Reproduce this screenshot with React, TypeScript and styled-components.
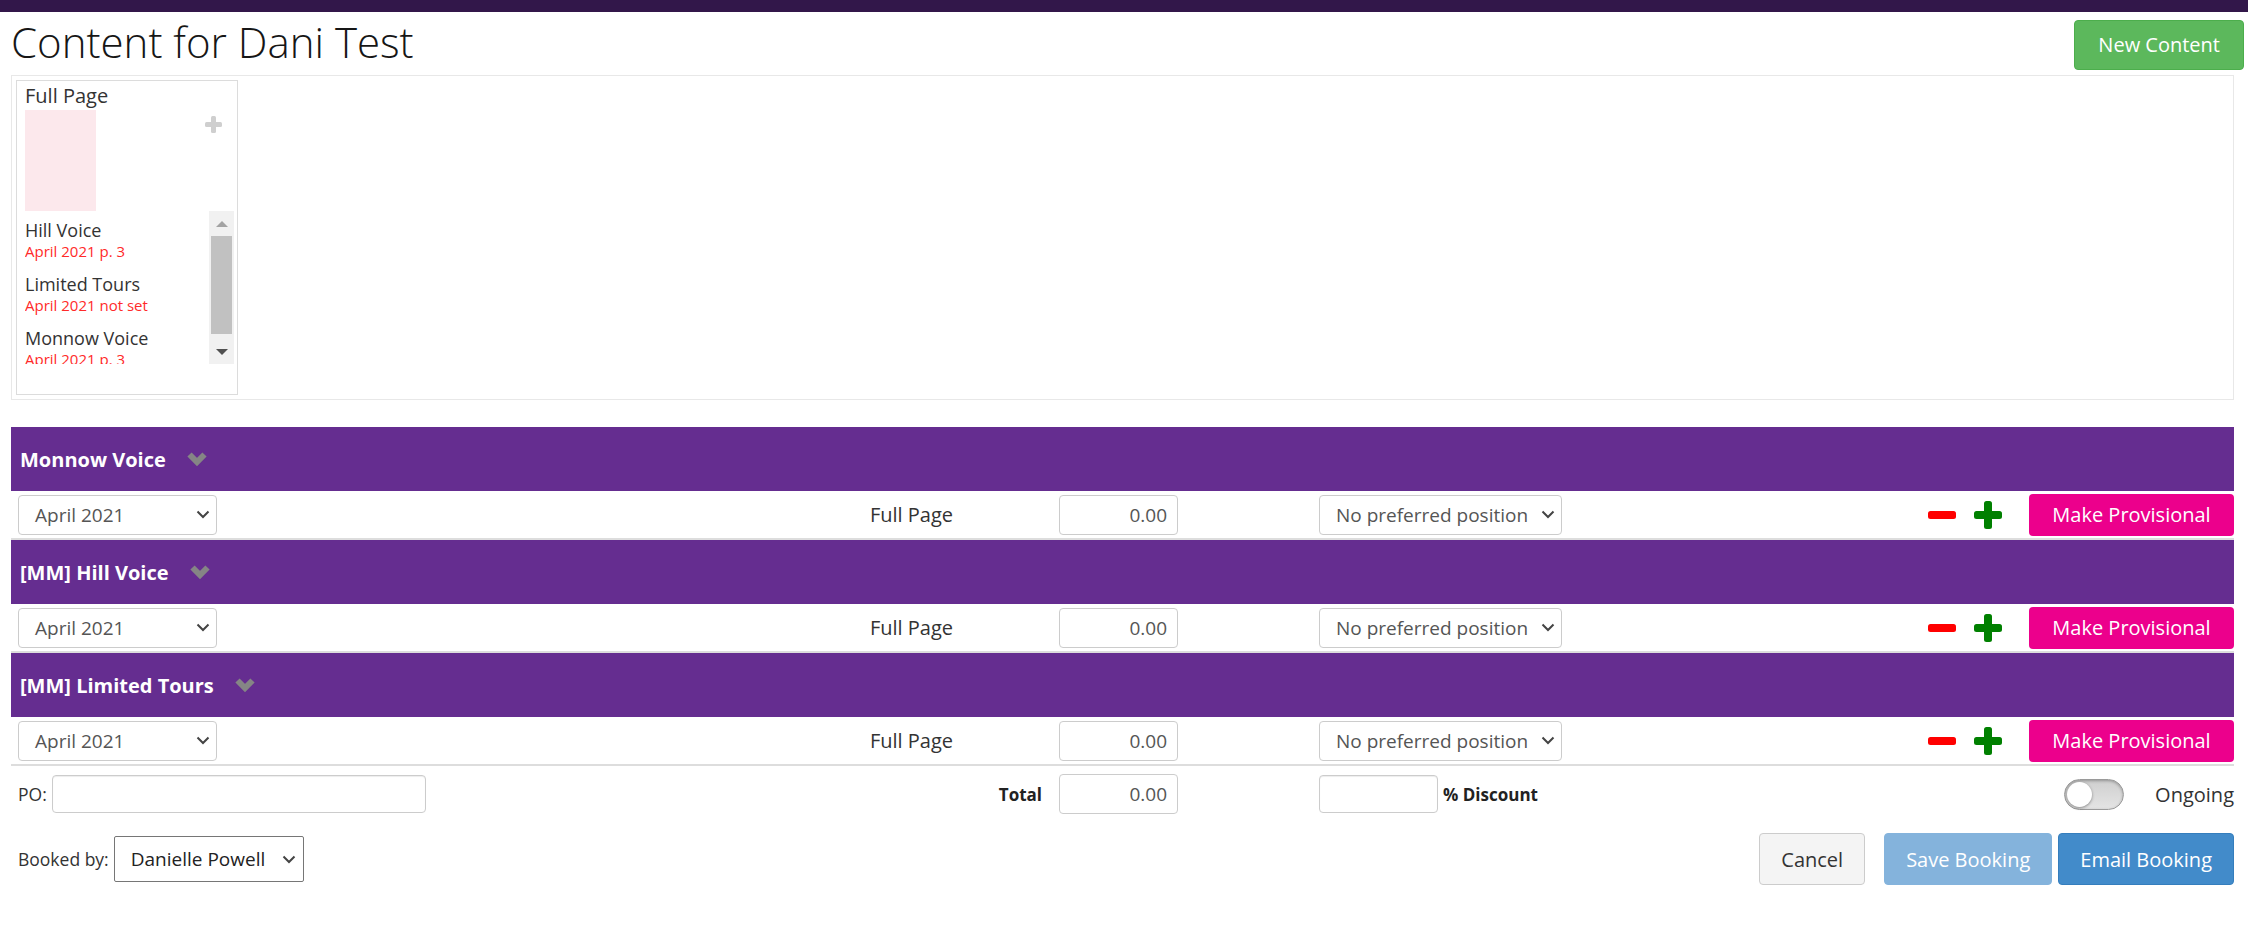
import React from "react";
import styled, { createGlobalStyle } from "styled-components";

const GlobalStyle = createGlobalStyle`
  * {
    box-sizing: border-box;
  }

  body {
    margin: 0;
    background: #fff;
    color: #333;
    font-family: "Open Sans", "Liberation Sans", sans-serif;
  }
`;

const publications = ["Monnow Voice", "[MM] Hill Voice", "[MM] Limited Tours"];

const bookings = [
  { title: "Hill Voice", detail: "April 2021 p. 3" },
  { title: "Limited Tours", detail: "April 2021 not set" },
  { title: "Monnow Voice", detail: "April 2021 p. 3" },
];

const SelectChevron = () => (
  <svg width="14" height="9" viewBox="0 0 14 9">
    <path d="M1.5 1.5 L7 7 L12.5 1.5" fill="none" stroke="#444" strokeWidth="2" />
  </svg>
);

const BarChevron = () => (
  <svg width="22" height="16" viewBox="0 0 22 16">
    <path d="M3.5 3.5 L11 11 L18.5 3.5" fill="none" stroke="#858585" strokeWidth="6" strokeLinejoin="miter" />
  </svg>
);

const CardPlus = () => (
  <svg width="17" height="17" viewBox="0 0 17 17">
    <rect x="6" y="0" width="5" height="17" rx="1.5" fill="#cfcfcf" />
    <rect x="0" y="6" width="17" height="5" rx="1.5" fill="#cfcfcf" />
  </svg>
);

const MinusIcon = () => (
  <svg width="28" height="8" viewBox="0 0 28 8">
    <rect x="0" y="0" width="28" height="8" rx="2.5" fill="#ff0000" />
  </svg>
);

const PlusIcon = () => (
  <svg width="28" height="28" viewBox="0 0 28 28">
    <rect x="10" y="0" width="8" height="28" rx="2.5" fill="#008000" />
    <rect x="0" y="10" width="28" height="8" rx="2.5" fill="#008000" />
  </svg>
);

const App = () => {
  return (
    <>
      <GlobalStyle />
      <TopBar />
      <Header>
        <Title>Content for Dani Test</Title>
        <NewButton>New Content</NewButton>
      </Header>
      <Main>
        <SizesPanel>
          <SizeCard>
            <CardLabel>Full Page</CardLabel>
            <PreviewRow>
              <Preview />
              <AddIcon>
                <CardPlus />
              </AddIcon>
            </PreviewRow>
            <ListRow>
              <BookingList>
                {bookings.map((b) => (
                  <BookingItem key={b.title}>
                    <BookingTitle>{b.title}</BookingTitle>
                    <BookingDetail>{b.detail}</BookingDetail>
                  </BookingItem>
                ))}
              </BookingList>
              <Scrollbar>
                <ScrollButton>
                  <Arrow $up $color="#a3a3a3" />
                </ScrollButton>
                <ScrollThumb />
                <ScrollButton>
                  <Arrow $color="#505050" />
                </ScrollButton>
              </Scrollbar>
            </ListRow>
          </SizeCard>
        </SizesPanel>

        <Sections>
          {publications.map((name) => (
            <Section key={name}>
              <Bar>
                <BarTitle>{name}</BarTitle>
                <BarToggle>
                  <BarChevron />
                </BarToggle>
              </Bar>
              <Row>
                <SelectBox $width={199}>
                  <span>April 2021</span>
                  <SelectChevron />
                </SelectBox>
                <SizeLabel>Full Page</SizeLabel>
                <NumberInput readOnly value="0.00" />
                <SelectBox $width={243} $col={5}>
                  <span>No preferred position</span>
                  <SelectChevron />
                </SelectBox>
                <RowIcons>
                  <MinusIcon />
                  <PlusIcon />
                </RowIcons>
                <PinkButton>Make Provisional</PinkButton>
              </Row>
            </Section>
          ))}
        </Sections>

        <TotalsRow>
          <PoGroup>
            <Field>
              <SmallLabel>PO:</SmallLabel>
              <TextInput $width={374} />
            </Field>
            <BoldLabel>Total</BoldLabel>
          </PoGroup>
          <NumberInput readOnly value="0.00" />
          <DiscountGroup>
            <TextInput $width={119} />
            <BoldLabel>% Discount</BoldLabel>
          </DiscountGroup>
          <OngoingGroup>
            <Switch>
              <SwitchKnob />
            </Switch>
            <span>Ongoing</span>
          </OngoingGroup>
        </TotalsRow>

        <FooterRow>
          <Field>
            <SmallLabel>Booked by:</SmallLabel>
            <UserSelect>
              <span>Danielle Powell</span>
              <SelectChevron />
            </UserSelect>
          </Field>
          <Actions>
            <ActionButton $variant="default">Cancel</ActionButton>
            <ActionButton $variant="disabled">Save Booking</ActionButton>
            <ActionButton $variant="primary">Email Booking</ActionButton>
          </Actions>
        </FooterRow>
      </Main>
    </>
  );
};

export default App;

const TopBar = styled.div`
  height: 12px;
  background: #32174a;
`;

const Header = styled.header`
  display: flex;
  justify-content: space-between;
  align-items: center;
  height: 63px;
  padding: 0 4px 0 11px;
`;

const Title = styled.h1`
  margin: 0 0 3px;
  font-size: 42px;
  font-weight: 300;
  line-height: 1.2;
  color: #161616;
`;

const NewButton = styled.button`
  height: 50px;
  margin-top: 2px;
  padding: 0 23px;
  border: 1px solid #4cae4c;
  border-radius: 4px;
  background: #5cb85c;
  color: #fff;
  font-family: inherit;
  font-size: 20px;
`;

const Main = styled.main`
  padding: 0 14px 0 11px;
`;

const SizesPanel = styled.div`
  height: 325px;
  padding: 4px;
  border: 1px solid #e8e8e8;
`;

const SizeCard = styled.div`
  display: flex;
  flex-direction: column;
  width: 222px;
  height: 315px;
  padding: 1px 3px 0 8px;
  border: 1px solid #dcdcdc;
`;

const CardLabel = styled.div`
  font-size: 20px;
  line-height: 28px;
  color: #333;
`;

const PreviewRow = styled.div`
  display: flex;
  justify-content: space-between;
  height: 101px;
`;

const Preview = styled.div`
  width: 71px;
  height: 101px;
  background: #fce8ec;
`;

const AddIcon = styled.div`
  margin: 6px 12px 0 0;
  line-height: 0;
`;

const ListRow = styled.div`
  display: flex;
  height: 153px;
`;

const BookingList = styled.div`
  flex: 1;
  overflow: hidden;
  padding-top: 8px;
`;

const BookingItem = styled.div`
  margin-bottom: 11px;
`;

const BookingTitle = styled.div`
  font-size: 18px;
  line-height: 22px;
  color: #333;
`;

const BookingDetail = styled.div`
  font-size: 15px;
  line-height: 21px;
  color: #ff2a2a;
`;

const Scrollbar = styled.div`
  display: flex;
  flex-direction: column;
  width: 25px;
  background: #f1f1f1;
`;

const ScrollButton = styled.div`
  display: flex;
  justify-content: center;
  align-items: center;
  height: 25px;
`;

const Arrow = styled.div<{ $up?: boolean; $color: string }>`
  width: 0;
  height: 0;
  border-left: 6px solid transparent;
  border-right: 6px solid transparent;
  ${({ $up, $color }) =>
    $up ? `border-bottom: 6px solid ${$color};` : `border-top: 6px solid ${$color};`}
`;

const ScrollThumb = styled.div`
  height: 98px;
  margin: 0 2px 5px;
  background: #c1c1c1;
`;

const Sections = styled.div`
  margin-top: 27px;
`;

const Section = styled.section``;

const Bar = styled.div`
  display: flex;
  align-items: center;
  height: 64px;
  padding-left: 9px;
  background: #652d90;
`;

const BarTitle = styled.h3`
  margin: 0;
  font-size: 20px;
  font-weight: 700;
  color: #fff;
`;

const BarToggle = styled.span`
  display: flex;
  margin-left: 20px;
`;

const rowColumns = "199px 842px 119px 141px 243px 1fr 205px";

const Row = styled.div`
  display: grid;
  grid-template-columns: ${rowColumns};
  align-items: center;
  height: 49px;
  padding-left: 7px;
  border-bottom: 2px solid #dddddd;
`;

const SelectBox = styled.div<{ $width: number; $col?: number }>`
  display: flex;
  justify-content: space-between;
  align-items: center;
  width: ${({ $width }) => $width}px;
  height: 40px;
  padding: 0 6px 0 16px;
  border: 1px solid #cccccc;
  border-radius: 4px;
  font-size: 19px;
  color: #555;
  ${({ $col }) => ($col ? `grid-column: ${$col};` : "")}
`;

const SizeLabel = styled.div`
  justify-self: end;
  padding-right: 106px;
  font-size: 20px;
  color: #333;
`;

const NumberInput = styled.input`
  grid-column: 3;
  width: 119px;
  height: 40px;
  padding: 0 10px;
  border: 1px solid #cccccc;
  border-radius: 4px;
  text-align: right;
  font-family: inherit;
  font-size: 19px;
  color: #555;
`;

const RowIcons = styled.div`
  display: flex;
  justify-self: end;
  align-items: center;
  gap: 18px;
  margin-right: 27px;
`;

const PinkButton = styled.button`
  width: 205px;
  height: 42px;
  border: none;
  border-radius: 4px;
  background: #ec008c;
  color: #fff;
  font-family: inherit;
  font-size: 20px;
`;

const TotalsRow = styled.div`
  display: grid;
  grid-template-columns: ${rowColumns};
  align-items: center;
  margin-top: 8px;
  padding-left: 7px;
`;

const PoGroup = styled.div`
  grid-column: 1 / 3;
  display: flex;
  justify-content: space-between;
  align-items: center;
  padding-right: 17px;
`;

const Field = styled.div`
  display: flex;
  align-items: center;
  gap: 5px;
`;

const SmallLabel = styled.span`
  font-size: 17.5px;
  color: #333;
`;

const BoldLabel = styled.span`
  font-size: 17px;
  font-weight: 700;
  color: #222;
`;

const TextInput = styled.input<{ $width: number }>`
  width: ${({ $width }) => $width}px;
  height: 38px;
  border: 1px solid #cccccc;
  border-radius: 4px;
  box-shadow: inset 0 1px 1px rgba(0, 0, 0, 0.075);
`;

const DiscountGroup = styled.div`
  grid-column: 5;
  display: flex;
  align-items: center;
  gap: 5px;
`;

const OngoingGroup = styled.div`
  grid-column: 6 / 8;
  justify-self: end;
  display: flex;
  align-items: center;
  gap: 31px;
  font-size: 20px;
  color: #333;
`;

const Switch = styled.div`
  display: flex;
  align-items: center;
  width: 60px;
  height: 31px;
  padding: 0 2px;
  border: 1px solid #9a9a9a;
  border-radius: 16px;
  background: linear-gradient(#cfcfcf, #e4e4e4);
  box-shadow: inset 0 1px 3px rgba(0, 0, 0, 0.3);
`;

const SwitchKnob = styled.div`
  width: 25px;
  height: 25px;
  border-radius: 50%;
  background: #fff;
  box-shadow: 0 1px 3px rgba(0, 0, 0, 0.4);
`;

const FooterRow = styled.div`
  display: flex;
  justify-content: space-between;
  align-items: center;
  margin-top: 19px;
  padding-left: 7px;
`;

const UserSelect = styled.div`
  display: flex;
  justify-content: space-between;
  align-items: center;
  width: 190px;
  height: 46px;
  padding: 0 7px 0 16px;
  border: 1px solid #767676;
  border-radius: 2px;
  font-size: 19px;
  color: #222;
`;

const Actions = styled.div`
  display: flex;
  align-items: center;
  gap: 6px;
`;

const buttonColors = {
  default: "background: #f4f4f4; border-color: #cccccc; color: #333; margin-right: 13px;",
  disabled: "background: #84b3dc; border-color: #84b3dc; color: #fff;",
  primary: "background: #428bca; border-color: #357ebd; color: #fff;",
};

const ActionButton = styled.button<{ $variant: keyof typeof buttonColors }>`
  height: 52px;
  padding: 0 21px;
  border: 1px solid;
  border-radius: 4px;
  font-family: inherit;
  font-size: 20px;
  ${({ $variant }) => buttonColors[$variant]}
`;
